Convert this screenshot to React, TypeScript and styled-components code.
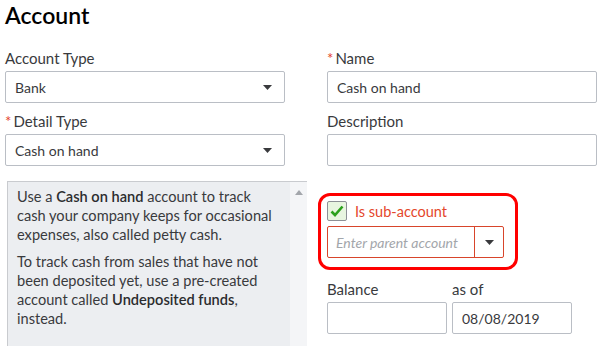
import styled, { createGlobalStyle } from 'styled-components';

const GlobalStyle = createGlobalStyle`
  html, body {
    margin: 0;
    padding: 0;
    background: #fff;
  }
  body {
    font-family: Lato, "Open Sans", sans-serif;
    color: #393a3d;
  }
`;

const Field = ({ label, required, children }: { label: string; required?: boolean; children?: React.ReactNode }) => (
  <FieldWrap>
    <Label>
      {required && <Star>*</Star>}
      {label}
    </Label>
    {children}
  </FieldWrap>
);

const Caret = () => (
  <svg width="9" height="5" viewBox="0 0 9 5">
    <path d="M0 0h9L4.5 5z" fill="#393a3d" />
  </svg>
);

const App = () => {
  return (
    <Page>
      <GlobalStyle />
      <Title>Account</Title>
      <Grid>
        <Field label="Account Type">
          <Select>
            <span>Bank</span>
            <Caret />
          </Select>
        </Field>
        <Field label="Name" required>
          <Input>Cash on hand</Input>
        </Field>
        <Field label="Detail Type" required>
          <Select>
            <span>Cash on hand</span>
            <Caret />
          </Select>
        </Field>
        <Field label="Description">
          <Input />
        </Field>
      </Grid>
      <Lower>
        <HelpBox>
          <HelpText>
            <p>
              Use a <b>Cash on hand</b> account to track cash your company keeps for occasional
              expenses, also called petty cash.
            </p>
            <p>
              To track cash from sales that have not been deposited yet, use a pre-created
              account called <b>Undeposited funds</b>, instead.
            </p>
          </HelpText>
          <ScrollTrack>
            <svg width="8" height="5" viewBox="0 0 8 5">
              <path d="M0 5L4 0l4 5z" fill="#a3a6ab" />
            </svg>
          </ScrollTrack>
        </HelpBox>
        <RightStack>
          <Highlight>
            <CheckRow>
              <CheckBox>
                <svg width="14" height="12" viewBox="0 0 14 12">
                  <path d="M1.5 6.5l3.5 3.5L12.5 1.5" fill="none" stroke="#2ca01c" strokeWidth="2.6" />
                </svg>
              </CheckBox>
              <CheckLabel>Is sub-account</CheckLabel>
            </CheckRow>
            <ParentSelect>
              <Placeholder>Enter parent account</Placeholder>
              <ArrowCell>
                <Caret />
              </ArrowCell>
            </ParentSelect>
          </Highlight>
          <BalanceRow>
            <Field label="Balance">
              <SmallInput />
            </Field>
            <Field label="as of">
              <SmallInput>08/08/2019</SmallInput>
            </Field>
          </BalanceRow>
        </RightStack>
      </Lower>
    </Page>
  );
};

export default App;

const Page = styled.div`
  padding: 0 0 0 5px;
  width: 606px;
  height: 346px;
  box-sizing: border-box;
  overflow: hidden;
`;

const Title = styled.h1`
  margin: 0;
  font-size: 23px;
  line-height: 30px;
  font-weight: 600;
  color: #000;
  height: 48px;
`;

const Grid = styled.div`
  display: grid;
  grid-template-columns: 280px 270px;
  column-gap: 42px;
  row-gap: 8px;
`;

const FieldWrap = styled.div`
  display: flex;
  flex-direction: column;
`;

const Label = styled.label`
  font-size: 15px;
  line-height: 20px;
  margin-bottom: 3px;
  color: #393a3d;
  white-space: nowrap;
`;

const Star = styled.span`
  color: #e4412b;
  margin-right: 2px;
`;

const boxBase = `
  box-sizing: border-box;
  height: 32px;
  border: 1px solid #babec5;
  border-radius: 2px;
  background: #fff;
  font-size: 14px;
  color: #393a3d;
  display: flex;
  align-items: center;
`;

const Select = styled.div`
  ${boxBase}
  justify-content: space-between;
  padding: 0 12px 0 9px;
`;

const Input = styled.div`
  ${boxBase}
  padding: 0 9px;
`;

const Lower = styled.div`
  display: flex;
  margin-top: 15px;
`;

const HelpBox = styled.div`
  margin-left: 2px;
  width: 300px;
  height: 180px;
  box-sizing: border-box;
  border: 1px solid #c9cbcf;
  border-right: none;
  background: #eceef1;
  display: flex;
`;

const HelpText = styled.div`
  flex: 1;
  padding: 5px 10px 0 9px;
  font-size: 14.6px;
  line-height: 19px;
  color: #393a3d;

  p {
    margin: 0 0 8px;
  }
  b {
    font-weight: 600;
    color: #2b2c2e;
  }
`;

const ScrollTrack = styled.div`
  width: 17px;
  background: #f4f5f7;
  display: flex;
  justify-content: center;
  padding-top: 8px;
  box-sizing: border-box;
`;

const RightStack = styled.div`
  margin-left: 11px;
  margin-top: 12px;
  display: flex;
  flex-direction: column;
`;

const Highlight = styled.div`
  width: 200px;
  height: 77px;
  box-sizing: border-box;
  border: 3px solid #f00;
  border-radius: 12px;
  padding: 4px 11px 0 6px;
`;

const CheckRow = styled.div`
  display: flex;
  align-items: center;
  height: 22px;
  margin-bottom: 4px;
`;

const CheckBox = styled.span`
  width: 20px;
  height: 20px;
  box-sizing: border-box;
  border: 1px solid #8d9096;
  border-radius: 2px;
  background: #e8f5e0;
  display: flex;
  align-items: center;
  justify-content: center;
`;

const CheckLabel = styled.span`
  margin-left: 8px;
  font-size: 14.5px;
  color: #e4472b;
`;

const ParentSelect = styled.div`
  box-sizing: border-box;
  height: 32px;
  width: 177px;
  border: 1px solid #d8452b;
  border-radius: 2px;
  display: flex;
`;

const Placeholder = styled.span`
  flex: 1;
  display: flex;
  align-items: center;
  padding-left: 8px;
  font-size: 14px;
  font-style: italic;
  color: #a3a6ab;
`;

const ArrowCell = styled.span`
  width: 28px;
  border-left: 1px solid #d8452b;
  display: flex;
  align-items: center;
  justify-content: center;
`;

const BalanceRow = styled.div`
  display: flex;
  gap: 5px;
  margin-top: 9px;
  margin-left: 9px;
`;

const SmallInput = styled.div`
  ${boxBase}
  width: 120px;
  padding: 0 9px;
`;
